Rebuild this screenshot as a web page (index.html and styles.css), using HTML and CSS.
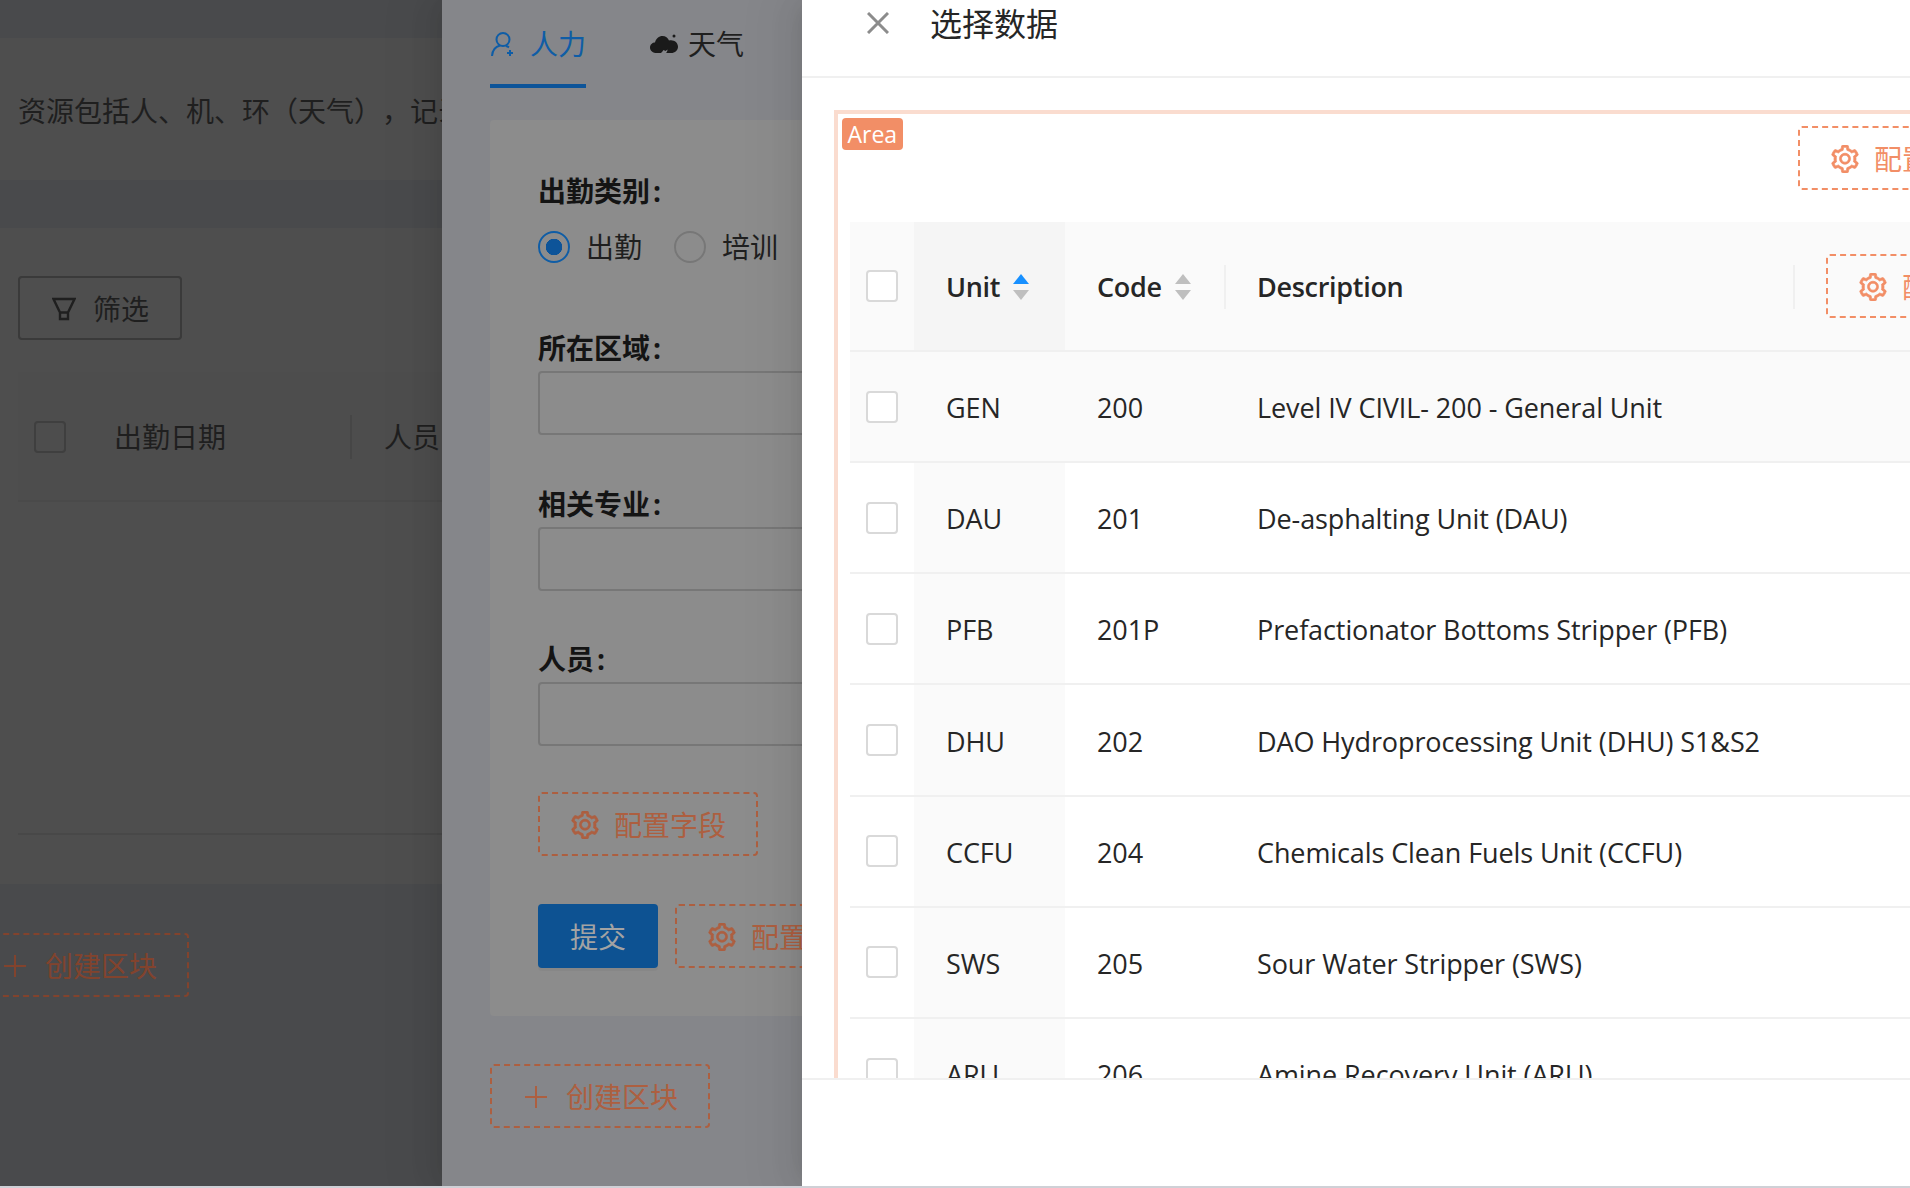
FILE: index.html
```html
<!DOCTYPE html>
<html lang="zh-CN">
<head>
  <meta charset="UTF-8">
  <meta name="viewport" content="width=device-width, initial-scale=1.0">
  <title>选择数据</title>
  <link rel="stylesheet" href="styles.css">
</head>
<body>
  <svg class="sprites" aria-hidden="true">
    <symbol id="gear" viewBox="64 64 896 896">
      <path fill="currentColor" stroke="currentColor" stroke-width="22" d="M924.8 625.7l-65.5-56c3.1-19 4.7-38.4 4.7-57.8s-1.6-38.8-4.7-57.8l65.5-56a32.03 32.03 0 0 0 9.3-35.2l-.9-2.6a443.74 443.74 0 0 0-79.7-137.9l-1.8-2.1a32.12 32.12 0 0 0-35.1-9.5l-81.3 28.9c-30-24.6-63.5-44-99.7-57.6l-15.7-85a32.05 32.05 0 0 0-25.8-25.7l-2.7-.5c-52.1-9.4-106.9-9.4-159 0l-2.7.5a32.05 32.05 0 0 0-25.8 25.7l-15.8 85.4a351.86 351.86 0 0 0-99 57.4l-81.9-29.1a32 32 0 0 0-35.1 9.5l-1.8 2.1a446.02 446.02 0 0 0-79.7 137.9l-.9 2.6c-4.5 12.5-.8 26.5 9.3 35.2l66.3 56.6c-3.1 18.8-4.6 38-4.6 57.1 0 19.2 1.5 38.4 4.6 57.1L99 625.5a32.03 32.03 0 0 0-9.3 35.2l.9 2.6c18.1 50.4 44.9 96.9 79.7 137.9l1.8 2.1a32.12 32.12 0 0 0 35.1 9.5l81.9-29.1c29.8 24.5 63.1 43.9 99 57.4l15.8 85.4a32.05 32.05 0 0 0 25.8 25.7l2.7.5a449.4 449.4 0 0 0 159 0l2.7-.5a32.05 32.05 0 0 0 25.8-25.7l15.7-85a350 350 0 0 0 99.7-57.6l81.3 28.9a32 32 0 0 0 35.1-9.5l1.8-2.1c34.8-41.1 61.6-87.5 79.7-137.9l.9-2.6c4.5-12.3.8-26.3-9.3-35zM788.3 465.9c2.5 15.1 3.8 30.6 3.8 46.1s-1.3 31-3.8 46.1l-6.6 40.1 74.7 63.9a370.03 370.03 0 0 1-42.6 73.6L721 702.8l-31.4 25.8c-23.9 19.6-50.5 35-79.3 45.8l-38.1 14.3-17.9 97a377.5 377.5 0 0 1-85 0l-17.9-97.2-37.8-14.5c-28.5-10.8-55-26.2-78.7-45.7l-31.4-25.9-93.4 33.2c-17-22.9-31.2-47.6-42.6-73.6l75.5-64.5-6.5-40c-2.4-14.9-3.7-30.3-3.7-45.5 0-15.3 1.2-30.6 3.7-45.5l6.5-40-75.5-64.5c11.3-26.1 25.6-50.7 42.6-73.6l93.4 33.2 31.4-25.9c23.7-19.5 50.2-34.9 78.7-45.7l37.9-14.3 17.9-97.2c28.1-3.2 56.8-3.2 85 0l17.9 97 38.1 14.3c28.7 10.8 55.4 26.2 79.3 45.8l31.4 25.8 92.8-32.9c17 22.9 31.2 47.6 42.6 73.6L781.8 426l6.5 39.9zM512 326c-97.2 0-176 78.8-176 176s78.8 176 176 176 176-78.8 176-176-78.8-176-176-176zm79.2 255.2A111.6 111.6 0 0 1 512 614c-29.9 0-58-11.7-79.2-32.8A111.6 111.6 0 0 1 400 502c0-29.9 11.7-58 32.8-79.2C454 401.6 482.1 390 512 390c29.9 0 58 11.6 79.2 32.8A111.6 111.6 0 0 1 624 502c0 29.9-11.7 58-32.8 79.2z"/>
    </symbol>
    <symbol id="plus" viewBox="0 0 24 24">
      <path fill="none" stroke="currentColor" stroke-width="2" d="M12 1v22M1 12h22"/>
    </symbol>
  </svg>

  <div class="stage">
    <!-- page behind the drawers -->
    <main class="base">
      <section class="base-intro">资源包括人、机、环（天气），记录每日的资源投入情况</section>
      <section class="base-card">
        <button class="filter-btn" type="button">
          <svg class="filter-icon" viewBox="0 0 24 24"><path fill="none" stroke="currentColor" stroke-width="2.4" d="M1.5 2h21L16 15.5V22H8v-6.500z M8 15.500h8"/></svg>
          筛选
        </button>
        <div class="base-table-head">
          <span class="base-check"></span>
          <span class="base-col base-col-date">出勤日期</span>
          <span class="base-col">人员</span>
        </div>
        <div class="base-table-body"></div>
      </section>
      <button class="dash-btn base-create" type="button">
        <svg class="plus-icon"><use href="#plus"/></svg>创建区块
      </button>
    </main>

    <!-- first drawer -->
    <aside class="drawer">
      <nav class="tabs">
        <a class="tab tab-active">
          <svg class="tab-icon" viewBox="0 0 26 26"><g fill="none" stroke="currentColor" stroke-width="2"><circle cx="13" cy="8.500" r="6.500"/><path d="M2 25c.5-6 3.500-9.500 8-10.500M16 15c1 .3 2 .7 3 1.300M20 19v6M17 22h6"/></g></svg>
          人力
        </a>
        <a class="tab">
          <svg class="tab-icon tab-icon-cloud" viewBox="0 0 28 22"><path fill="#1a1a1a" d="M7 20C3 20 0 18 0 14.500 0 11.500 2.500 9.500 5 9.500 6 5.500 9 3 12.500 3c3 0 5.500 1.800 6.500 4.500 .6-.2 1.300-.3 2-.3 3.800 0 7 2.800 7 6.500S25 20 21 20h-5c1-1 1.500-2.200 1.500-3.500l-2 1.500-2-1c-.5 1-1.500 2-2.500 3z"/><circle cx="24" cy="3" r="1.500" fill="#1a1a1a"/></svg>
          天气
        </a>
      </nav>
      <form class="form-card">
        <div class="form-item">
          <label class="form-label">出勤类别</label>
          <div class="radio-row">
            <span class="radio radio-on"></span><span class="radio-text">出勤</span>
            <span class="radio"></span><span class="radio-text">培训</span>
          </div>
        </div>
        <div class="form-item">
          <label class="form-label">所在区域</label>
          <input class="form-input" type="text">
        </div>
        <div class="form-item">
          <label class="form-label">相关专业</label>
          <input class="form-input" type="text">
        </div>
        <div class="form-item">
          <label class="form-label">人员</label>
          <input class="form-input" type="text">
        </div>
        <button class="dash-btn form-config" type="button">
          <svg class="gear-icon"><use href="#gear"/></svg>配置字段
        </button>
        <div class="form-actions">
          <button class="submit-btn" type="button">提交</button>
          <button class="dash-btn" type="button">
            <svg class="gear-icon"><use href="#gear"/></svg>配置按钮
          </button>
        </div>
      </form>
      <button class="dash-btn drawer-create" type="button">
        <svg class="plus-icon"><use href="#plus"/></svg>创建区块
      </button>
    </aside>

    <!-- select data drawer -->
    <aside class="dialog">
      <header class="dialog-head">
        <svg class="close-icon" viewBox="0 0 22 22"><path fill="none" stroke="currentColor" stroke-width="3" d="M1 1l20 20M21 1L1 21"/></svg>
        <h2 class="dialog-title">选择数据</h2>
      </header>
      <div class="dialog-body">
        <div class="area">
          <span class="area-tag">Area</span>
          <div class="area-tools">
            <button class="dash-btn" type="button">
              <svg class="gear-icon"><use href="#gear"/></svg>配置操作
            </button>
          </div>
          <table class="data-table">
            <colgroup>
              <col class="col-check"><col class="col-unit"><col class="col-code"><col class="col-desc"><col class="col-action">
            </colgroup>
            <thead>
              <tr>
                <th class="cell-check"><span class="check"></span></th>
                <th class="sorted">
                  <span class="th-inner">Unit
                    <svg class="sorter" viewBox="0 0 16 26"><path fill="#1890ff" d="M8 0l8 10H0z"/><path fill="#bfbfbf" d="M8 26L0 16h16z"/></svg>
                  </span>
                </th>
                <th class="sep">
                  <span class="th-inner">Code
                    <svg class="sorter" viewBox="0 0 16 26"><path fill="#bfbfbf" d="M8 0l8 10H0z"/><path fill="#bfbfbf" d="M8 26L0 16h16z"/></svg>
                  </span>
                </th>
                <th class="sep cell-desc">Description</th>
                <th class="th-action">
                  <button class="dash-btn" type="button">
                    <svg class="gear-icon"><use href="#gear"/></svg>配置字段
                  </button>
                </th>
              </tr>
            </thead>
            <tbody>
              <tr class="row-hover"><td class="cell-check"><span class="check"></span></td><td class="sorted">GEN</td><td>200</td><td class="cell-desc">Level IV CIVIL- 200 - General Unit</td><td></td></tr>
              <tr><td class="cell-check"><span class="check"></span></td><td class="sorted">DAU</td><td>201</td><td class="cell-desc">De-asphalting Unit (DAU)</td><td></td></tr>
              <tr><td class="cell-check"><span class="check"></span></td><td class="sorted">PFB</td><td>201P</td><td class="cell-desc">Prefactionator Bottoms Stripper (PFB)</td><td></td></tr>
              <tr><td class="cell-check"><span class="check"></span></td><td class="sorted">DHU</td><td>202</td><td class="cell-desc">DAO Hydroprocessing Unit (DHU) S1&amp;S2</td><td></td></tr>
              <tr><td class="cell-check"><span class="check"></span></td><td class="sorted">CCFU</td><td>204</td><td class="cell-desc">Chemicals Clean Fuels Unit (CCFU)</td><td></td></tr>
              <tr><td class="cell-check"><span class="check"></span></td><td class="sorted">SWS</td><td>205</td><td class="cell-desc">Sour Water Stripper (SWS)</td><td></td></tr>
              <tr><td class="cell-check"><span class="check"></span></td><td class="sorted">ARU</td><td>206</td><td class="cell-desc">Amine Recovery Unit (ARU)</td><td></td></tr>
            </tbody>
          </table>
        </div>
      </div>
      <footer class="dialog-foot"></footer>
    </aside>
  </div>
</body>
</html>
```

FILE: styles.css
```css
body {
  margin: 0;
  background-color: #cfd0d6;
  font-family: 'Open Sans', 'Noto Sans CJK SC', sans-serif;
  font-size: 28px;
  line-height: 44px;
}
button {
  font: inherit;
}
.sprites {
  display: none;
}
.stage {
  position: relative;
  height: 1186px;
  overflow: hidden;
}

/* page behind the drawers */
.base {
  height: 100%;
  padding-top: 38px;
  box-sizing: border-box;
  background-color: #494a4c;
  color: #1f1f1f;
  --dash: #82432d;
}
.base-intro {
  height: 142px;
  padding-left: 18px;
  box-sizing: border-box;
  line-height: 146px;
  white-space: nowrap;
  text-spacing-trim: space-all;
  background-color: #4e4e4e;
}
.base-card {
  margin-top: 48px;
  height: 656px;
  padding: 48px 0 0 18px;
  box-sizing: border-box;
  background-color: #4e4e4e;
}
.filter-btn {
  display: flex;
  align-items: center;
  gap: 17px;
  width: 164px;
  height: 64px;
  padding: 2px 0 0 32px;
  box-sizing: border-box;
  border: 2px solid #3a3a3a;
  border-radius: 4px;
  background: transparent;
  color: #1f1f1f;
}
.filter-icon {
  width: 24px;
  height: 24px;
}
.base-table-head {
  display: flex;
  align-items: center;
  height: 130px;
  margin-top: 32px;
  padding: 2px 0 0 16px;
  background-color: #4d4d4d;
  border-bottom: 2px solid #4a4a4a;
  box-sizing: border-box;
}
.base-check {
  width: 32px;
  height: 32px;
  box-sizing: border-box;
  border: 2px solid #3f3f3f;
  border-radius: 4px;
}
.base-col {
  padding-left: 32px;
  white-space: nowrap;
}
.base-col-date {
  position: relative;
  width: 270px;
  box-sizing: border-box;
  margin-left: 16px;
}
.base-col-date::after {
  content: "";
  position: absolute;
  right: 0;
  top: 0;
  width: 2px;
  height: 44px;
  background-color: #464646;
}
.base-table-body {
  height: 333px;
  border-bottom: 2px solid #484848;
  box-sizing: border-box;
}
.base-create {
  margin: 49px 0 0 -31px;
}

/* dashed config buttons */
.dash-btn {
  display: inline-flex;
  align-items: center;
  gap: 15px;
  width: 220px;
  height: 64px;
  padding: 2px 0 0 31px;
  box-sizing: border-box;
  border: 2px dashed var(--dash);
  border-radius: 4px;
  background: transparent;
  color: var(--dash);
  white-space: nowrap;
  flex-shrink: 0;
}
.gear-icon {
  width: 28px;
  height: 28px;
  flex-shrink: 0;
}
.plus-icon {
  width: 24px;
  height: 24px;
  margin: 0 3px 0 1px;
  flex-shrink: 0;
}

/* first drawer */
.drawer {
  position: absolute;
  top: 0;
  bottom: 0;
  left: 442px;
  right: 0;
  background-color: #85868a;
  color: #1f1f1f;
  --dash: #ad5f40;
  box-shadow: -6px 0 16px -8px rgba(0, 0, 0, 0.08), -9px 0 28px rgba(0, 0, 0, 0.05), -12px 0 48px 16px rgba(0, 0, 0, 0.03);
}
.tabs {
  display: flex;
  gap: 64px;
  height: 88px;
  margin: 0 48px;
}
.tab {
  display: flex;
  align-items: center;
  gap: 10px;
  height: 88px;
  box-sizing: border-box;
}
.tab-active {
  gap: 14px;
  color: #0f5da6;
  border-bottom: 4px solid #0d5499;
  padding-top: 4px;
}
.tab-icon {
  width: 26px;
  height: 26px;
}
.tab-icon-cloud {
  width: 28px;
  height: 22px;
}
.form-card {
  margin: 32px 0 0 48px;
  padding: 50px 48px 48px;
  height: 896px;
  box-sizing: border-box;
  border-radius: 4px;
  background-color: #8c8c8c;
}
.form-item {
  margin-bottom: 47.800px;
}
.form-config {
  margin-top: -2px;
}
.form-label {
  display: block;
  padding-bottom: 2px;
  line-height: 42px;
  font-weight: 700;
  color: #141414;
}
.form-label::after {
  content: ":";
  margin-left: 3px;
}
.radio-row {
  display: flex;
  align-items: center;
  height: 65px;
}
.radio {
  width: 32px;
  height: 32px;
  box-sizing: border-box;
  border: 2px solid #777;
  border-radius: 50%;
  background-color: #8c8c8c;
}
.radio-on {
  border-color: #0f5da6;
  background: radial-gradient(circle, #0d5499 0 8px, #8c8c8c 8.500px);
}
.radio-text {
  margin: 0 32px 0 16px;
}
.form-input {
  display: block;
  width: 100%;
  height: 64px;
  box-sizing: border-box;
  border: 2px solid #777;
  border-radius: 4px;
  background: transparent;
}
.form-actions {
  display: flex;
  gap: 17px;
  margin-top: 48px;
}
.submit-btn {
  width: 120px;
  height: 64px;
  padding: 2px 0 0;
  border: none;
  border-radius: 4px;
  background-color: #0d5292;
  color: #a3a3a3;
  box-shadow: 0 3px 0 rgba(0, 0, 0, 0.03);
}
.drawer-create {
  margin: 48px 0 0 48px;
}

/* select data drawer */
.dialog {
  position: absolute;
  top: 0;
  bottom: 0;
  left: 802px;
  right: 0;
  display: flex;
  flex-direction: column;
  background-color: #fff;
  color: #262626;
  --dash: #f28e66;
  box-shadow: -6px 0 16px -8px rgba(0, 0, 0, 0.08), -9px 0 28px rgba(0, 0, 0, 0.05), -12px 0 48px 16px rgba(0, 0, 0, 0.03);
}
.dialog-head {
  display: flex;
  align-items: flex-start;
  gap: 41px;
  height: 78px;
  padding-left: 65px;
  box-sizing: border-box;
  border-bottom: 2px solid #f0f0f0;
  flex-shrink: 0;
}
.close-icon {
  width: 22px;
  height: 22px;
  margin-top: 12px;
  color: #8c8c8c;
}
.dialog-title {
  margin: 0;
  font-size: 32px;
  font-weight: 400;
  line-height: 48px;
}
.dialog-body {
  flex: 1;
  min-height: 0;
  padding: 32px 0 0 32px;
  overflow: hidden;
}
.dialog-foot {
  height: 108px;
  box-sizing: border-box;
  border-top: 2px solid #f0f0f0;
  flex-shrink: 0;
  background-color: #fff;
}
.area {
  position: relative;
  width: 1400px;
  padding: 12px;
  border: 4px solid #fadccf;
  box-sizing: border-box;
}
.area-tag {
  position: absolute;
  top: 4px;
  left: 4px;
  padding: 0 5.500px;
  border-radius: 4px;
  background-color: #f28e66;
  color: #fff;
  font-size: 23px;
  line-height: 32px;
}
.area-tools {
  height: 64px;
  margin-bottom: 32px;
  padding-left: 948px;
}

/* table */
.data-table {
  width: 1240px;
  table-layout: fixed;
  border-collapse: collapse;
  font-size: 27px;
  letter-spacing: -0.1px;
}
.col-check { width: 64px; }
.col-unit { width: 151px; }
.col-code { width: 161px; }
.col-desc { width: 569px; }
.col-action { width: 295px; }
.data-table th {
  position: relative;
  height: 129px;
  padding: 2px 32px 0;
  background-color: #fafafa;
  font-weight: 600;
  letter-spacing: -0.3px;
  text-align: left;
  border-bottom: 2px solid #f0f0f0;
  box-sizing: border-box;
}
.data-table td {
  height: 111.170px;
  padding: 3px 32px 0;
  border-bottom: 2px solid #f0f0f0;
  box-sizing: border-box;
  white-space: nowrap;
}
.data-table .cell-check {
  padding: 0 16px;
}
.data-table .cell-desc {
  padding-left: 31px;
}
.data-table .th-action {
  padding: 0 0 0 31px;
  letter-spacing: normal;
  font-size: 28px;
  font-weight: 400;
}
.data-table td.sorted {
  background-color: #fafafa;
}
.data-table th.sorted {
  background-color: #f5f5f5;
}
.data-table .row-hover td {
  background-color: #fafafa;
}
.data-table th.sep::after {
  content: "";
  position: absolute;
  right: 0;
  top: 43px;
  width: 2px;
  height: 44px;
  background-color: #f0f0f0;
}
.th-inner {
  display: flex;
  align-items: center;
  gap: 13px;
}
.sorter {
  width: 16px;
  height: 26px;
}
.check {
  display: block;
  width: 32px;
  height: 32px;
  box-sizing: border-box;
  border: 2px solid #d9d9d9;
  border-radius: 4px;
  background-color: #fff;
}
```
